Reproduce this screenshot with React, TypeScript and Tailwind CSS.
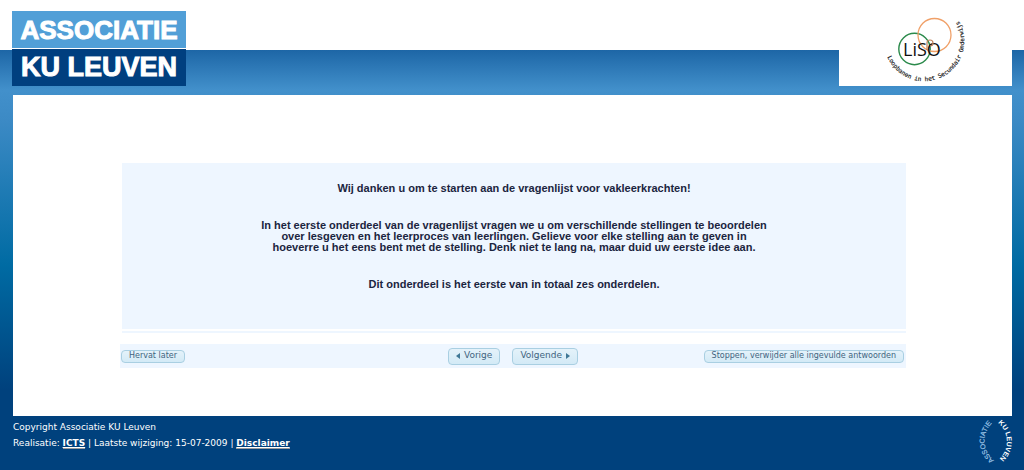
import type { ReactNode } from "react";

function AssociationLogo() {
  return (
    <a
      href="#"
      className="flex h-[75px] w-[174px] flex-col gap-px bg-white text-center font-['Liberation_Sans',sans-serif] font-bold text-white no-underline [-webkit-text-stroke:1px_white]"
    >
      <span className="h-[37px] bg-[#519fd7] text-[26px] leading-[38px]">ASSOCIATIE</span>
      <span className="h-[37px] bg-[#003f7f] text-[27px] leading-[37px]">KU LEUVEN</span>
    </a>
  );
}

function LisoLogo() {
  return (
    <svg
      role="img"
      aria-label="LiSO"
      viewBox="0 0 90 76"
      className="h-[76px] w-[90px] overflow-visible"
      fill="none"
    >
      <circle cx="33.5" cy="39" r="15.7" stroke="#2b8a4b" strokeWidth="1.4" />
      <circle cx="53.5" cy="25" r="16.5" stroke="#f0a068" strokeWidth="1.3" />
      <text x="22" y="46" fontSize="18" fill="#111" className="font-['Open_Sans',sans-serif]">
        LiSO
      </text>
      <path d="M46 40 V33 A3 3 0 1 1 49 36" stroke="#c0805a" strokeWidth="1.2" />
      <path id="liso-arc" d="M6.4 47 A40.1 40.1 0 1 0 76 8" />
      <text fontSize="6" fill="#111" stroke="#111" strokeWidth="0.15" className="font-['DejaVu_Sans_Mono',monospace]">
        <textPath href="#liso-arc">Loopbanen in het Secundair Onderwijs</textPath>
      </text>
    </svg>
  );
}

function Seal() {
  return (
    <svg
      role="img"
      aria-label="Associatie KU Leuven"
      viewBox="0 0 36 44"
      className="h-[44px] w-[36px] overflow-visible font-['Liberation_Sans',sans-serif]"
    >
      <path id="seal-left" d="M16 41 A24 24 0 0 1 17 2" fill="none" />
      <path id="seal-right" d="M20 4 A24 24 0 0 1 19 42" fill="none" />
      <text fontSize="7" fill="#9cc4e6" stroke="#9cc4e6" strokeWidth="0.2">
        <textPath href="#seal-left">ASSOCIATIE</textPath>
      </text>
      <text fontSize="7" fontWeight="bold" fill="#fff">
        <textPath href="#seal-right">KU LEUVEN</textPath>
      </text>
    </svg>
  );
}

function SurveyButton({ children, large = false }: { children: ReactNode; large?: boolean }) {
  return (
    <button
      type="button"
      className={
        "flex items-center gap-1 whitespace-nowrap rounded border border-[#a9cfe2] bg-linear-to-b from-[#e4f2fa] to-[#d3eaf6] text-[#3f6480] " +
        (large ? "h-[17px] px-[7px] text-[9px]" : "h-[13px] px-[7px] text-[8px]")
      }
    >
      {children}
    </button>
  );
}

export default function App() {
  return (
    <div className="flex min-h-screen flex-col bg-[linear-gradient(to_bottom,#fff_50px,#1d66a6_50px,#4290cb_90px,#3c8ac5_120px,#006ba3_265px,#00417d_390px,#00417d_100%)] font-['DejaVu_Sans',sans-serif]">
      <header className="flex items-start justify-between px-3 pb-[9px]">
        <div className="pt-[11px]">
          <AssociationLogo />
        </div>
        <div className="flex h-[86px] w-[173px] justify-center bg-white pt-[10px]">
          <LisoLogo />
        </div>
      </header>

      <main className="mr-3 ml-[13px] flex-1 bg-white pt-[68px] pr-[106px] pb-12 pl-[109px]">
        <section className="flex flex-col gap-[26px] bg-[#eef6ff] pt-5 pb-[39px] text-center font-['Liberation_Sans',sans-serif] text-[11px] leading-[11px] font-bold text-[#1b2540]">
          <p>Wij danken u om te starten aan de vragenlijst voor vakleerkrachten!</p>
          <p>
            In het eerste onderdeel van de vragenlijst vragen we u om verschillende stellingen te beoordelen
            <br />
            over lesgeven en het leerproces van leerlingen. Gelieve voor elke stelling aan te geven in
            <br />
            hoeverre u het eens bent met de stelling. Denk niet te lang na, maar duid uw eerste idee aan.
          </p>
          <p>Dit onderdeel is het eerste van in totaal zes onderdelen.</p>
        </section>
        <div className="mt-0.5 h-0.5 bg-[#eef6ff]" />
        <nav className="mt-[11px] -ml-0.5 grid h-6 grid-cols-[1fr_auto_1fr] items-center bg-[#eef6ff]">
          <div className="flex pl-px">
            <SurveyButton>Hervat later</SurveyButton>
          </div>
          <div className="flex gap-3">
            <SurveyButton large>
              <svg viewBox="0 0 4 6" className="h-1.5 w-1" fill="#3f7896">
                <path d="M4 0 V6 L0 3 Z" />
              </svg>
              Vorige
            </SurveyButton>
            <SurveyButton large>
              Volgende
              <svg viewBox="0 0 4 6" className="h-1.5 w-1" fill="#3f7896">
                <path d="M0 0 V6 L4 3 Z" />
              </svg>
            </SurveyButton>
          </div>
          <div className="flex justify-end pr-0.5">
            <SurveyButton>Stoppen, verwijder alle ingevulde antwoorden</SurveyButton>
          </div>
        </nav>
      </main>

      <footer className="flex h-[54px] justify-between pr-[10px] pl-[13px] text-[9px] leading-4 text-white">
        <div className="pt-[3px]">
          <p>Copyright Associatie KU Leuven</p>
          <p>
            Realisatie:{" "}
            <a href="#" className="border-b border-[#9b9b9b] font-bold underline">ICTS</a>
            {" | Laatste wijziging: 15-07-2009 | "}
            <a href="#" className="border-b border-[#9b9b9b] font-bold underline">Disclaimer</a>
          </p>
        </div>
        <div className="pt-[3px]">
          <Seal />
        </div>
      </footer>
    </div>
  );
}
